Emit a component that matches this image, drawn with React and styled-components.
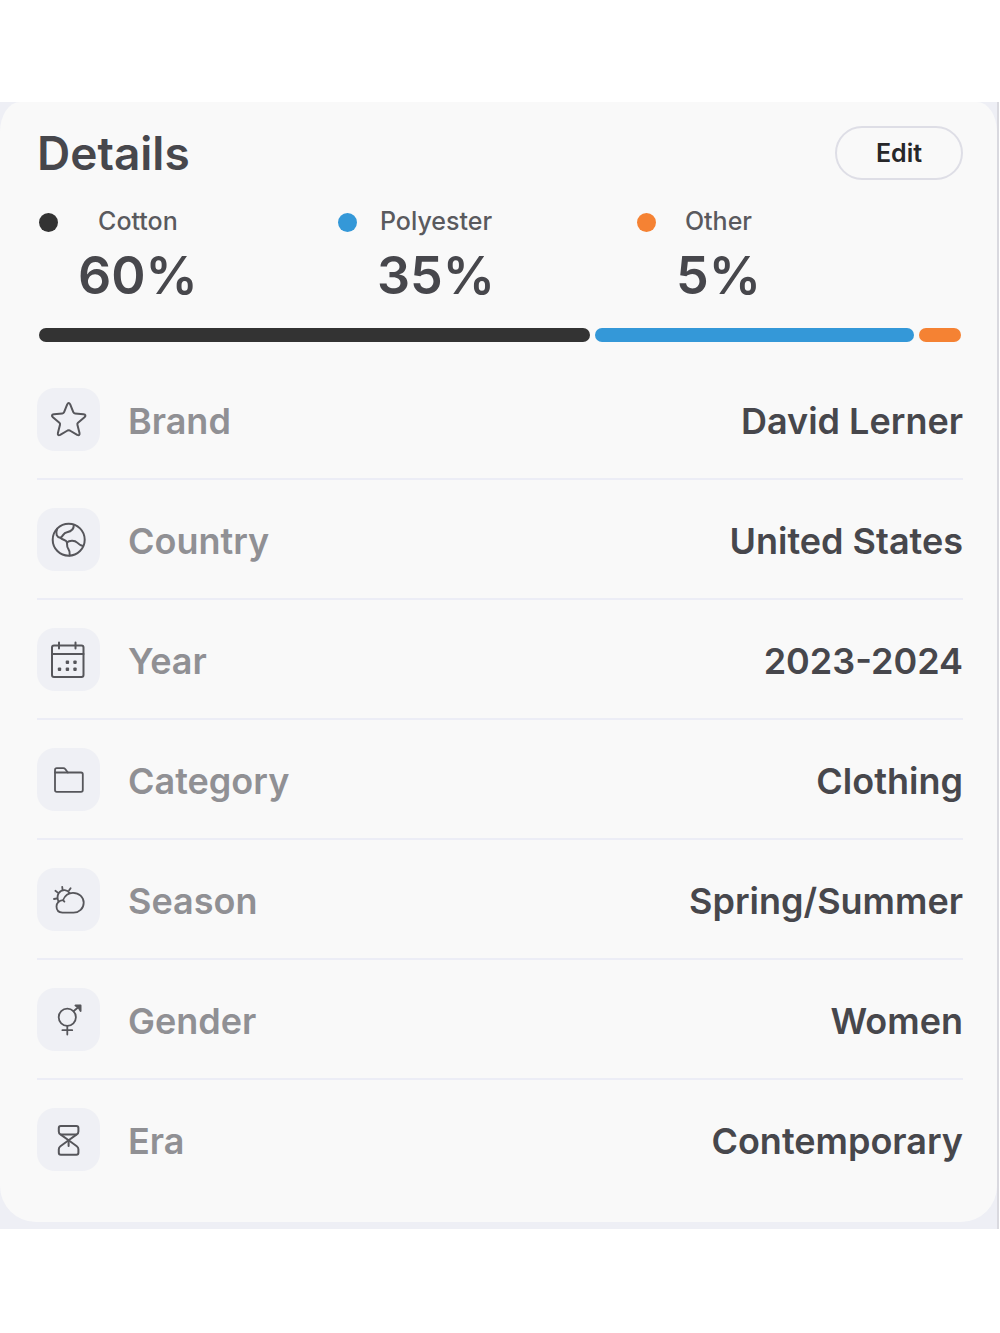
import styled, { createGlobalStyle } from "styled-components";

const GlobalStyle = createGlobalStyle`
  * {
    box-sizing: border-box;
  }
  body {
    margin: 0;
    background-color: #fff;
    font-family: Inter, "Liberation Sans", sans-serif;
    color: #47474c;
  }
`;

const Page = styled.main`
  margin: 102px 1px 104px 0;
  padding-bottom: 7px;
  border-right: 2px solid #d9d9df;
  background-color: #eeeff5;
`;
const Card = styled.section`
  padding: 22px 34px 22px 37px;
  border-radius: 20px 20px 36px 36px / 30px 30px 36px 36px;
  background-color: #f9f9f9;
`;
const Header = styled.header`
  display: flex;
  align-items: center;
  justify-content: space-between;
`;
const Title = styled.h2`
  margin: 0;
  font-size: 46px;
  font-weight: 600;
  line-height: 58px;
`;
const EditButton = styled.button`
  width: 128px;
  height: 54px;
  padding: 0;
  border: 2px solid #dedee6;
  border-radius: 27px;
  background-color: transparent;
  font-family: inherit;
  font-size: 25px;
  font-weight: 600;
  color: #27272a;
  cursor: pointer;
`;

// Fabric composition
const Legend = styled.ul`
  display: grid;
  grid-template-columns: repeat(3, 1fr);
  margin: 22px 0 0;
  padding: 0 27px 0 2px;
  list-style: none;
`;
const LegendItem = styled.li`
  display: flex;
  align-items: flex-start;
  gap: 20px;
`;
const Dot = styled.span`
  width: 19px;
  height: 19px;
  margin-top: 9px;
  border-radius: 50%;
  background-color: ${props => props.$color};
`;
const LegendText = styled.div`
  display: flex;
  flex-direction: column;
  align-items: center;
`;
const Fabric = styled.span`
  font-size: 25px;
  font-weight: 500;
  line-height: 34px;
  color: #5a5a5e;
`;
const Percent = styled.strong`
  font-size: 52px;
  font-weight: 600;
  line-height: 76px;
`;
const Bar = styled.div`
  display: flex;
  gap: 5px;
  margin-top: 14px;
  padding: 0 2px;
`;
const Segment = styled.span`
  flex: ${props => props.$share} 0 0;
  height: 14px;
  border-radius: 7px;
  background-color: ${props => props.$color};
`;

const List = styled.dl`
  margin: 18px 0 0;
`;
const Row = styled.div`
  display: flex;
  align-items: center;
  height: 120px;
  border-bottom: 2px solid #ecedf6;
  &:last-child {
    border-bottom-color: transparent;
  }
`;
const Tile = styled.span`
  display: flex;
  width: 63px;
  height: 63px;
  border-radius: 18px;
  background-color: #eff0f5;
`;
const Label = styled.dt`
  margin-left: 28px;
  padding-top: 4px;
  font-size: 36px;
  font-weight: 600;
  line-height: 44px;
  color: #909094;
`;
const Value = styled.dd`
  margin: 0 0 0 auto;
  padding-top: 4px;
  font-size: 36px;
  font-weight: 600;
  line-height: 44px;
`;

const Icon = ({ children, strokeWidth = 2 }) => (
  <svg
    width="63"
    height="63"
    viewBox="0 0 63 63"
    fill="none"
    stroke="#56565b"
    strokeWidth={strokeWidth}
    strokeLinecap="round"
    strokeLinejoin="round"
    aria-hidden="true"
  >
    {children}
  </svg>
);

const StarIcon = () => (
  <Icon>
    <path d="M30.2 16.4Q31.7 13.4 33.2 16.4L36.3 24.2Q36.8 25.4 38 25.5L46.5 26.3Q49.8 26.8 47.5 29.2L41 34.7Q40.1 35.5 40.4 36.7L42.5 45Q43 48.2 40.2 46.9L32.8 42.5Q31.7 41.9 30.6 42.5L23.2 46.9Q20.4 48.2 20.9 45L23 36.7Q23.3 35.5 22.4 34.7L15.9 29.2Q13.6 26.8 16.9 26.3L25.4 25.5Q26.6 25.4 27.1 24.2Z" />
  </Icon>
);
const GlobeIcon = () => (
  <Icon>
    <circle cx="31.7" cy="31.7" r="16" />
    <path d="M36.8 16.8C37 21 34 23.6 30 24.2C26 24.8 26.5 28 23.5 29.8C20 29.5 18 26 20.2 20.8" />
    <path d="M23.5 29.8C25.5 32 28.5 31.6 29.8 33.8C30.6 36 29.3 38.2 31.2 40.6C33 43 33 45 32.7 47.5" />
    <path d="M29.8 34.6C32.5 32 38 32.4 40.2 34.6C42 36.4 43.8 37.4 46 38" />
  </Icon>
);
const CalendarIcon = () => (
  <Icon>
    <rect x="15" y="17.5" width="31.5" height="31.5" rx="2" />
    <path d="M15 26H46.5M22 14.5V20.5M38.5 14.5V20.5" />
    <g fill="#56565b" stroke="none">
      <rect x="28.7" y="32.5" width="3.4" height="3.4" rx="1" />
      <rect x="36.3" y="32.5" width="3.4" height="3.4" rx="1" />
      <rect x="20.8" y="39.5" width="3.4" height="3.4" rx="1" />
      <rect x="28.7" y="39.5" width="3.4" height="3.4" rx="1" />
      <rect x="36.3" y="39.5" width="3.4" height="3.4" rx="1" />
    </g>
  </Icon>
);
const FolderIcon = () => (
  <Icon strokeWidth={1.8}>
    <path d="M18 24.5V22Q18 20.2 19.8 20.2H26.2Q27.6 20.2 28.4 21.2L30.8 24.5" />
    <path d="M18 24.5H44Q45.8 24.5 45.8 26.3V42Q45.8 43.8 44 43.8H19.8Q18 43.8 18 42Z" />
  </Icon>
);
const WeatherIcon = () => (
  <Icon strokeWidth={1.8}>
    <path d="M25.5 44.7Q19.5 44.2 19.5 38.5Q19.8 33 26 32.2C28 27 31.5 24.8 36 24.8C42 24.8 46.7 29 46.7 34.7C46.7 40.5 42 44.7 36.5 44.7Z" />
    <path d="M21.5 33.6C18.8 27 22.5 21.8 27.8 22.2Q30.8 22.6 32.8 25.2" />
    <path d="M25.6 21.8L25.2 18.8M32 22.6L33.6 20.2M20.8 24.6L18.4 22.8M19.8 30.5L17 31M26.2 32.4L27.4 33.6" />
  </Icon>
);
const GenderIcon = () => (
  <Icon strokeWidth={1.8}>
    <circle cx="30.3" cy="29.3" r="8.6" />
    <path d="M36.5 23.2L43 17.8M30.3 38V46.6M25.4 42.2H35.2" />
    <path d="M38.4 17.4H43.6V23L41.4 19.4Z" fill="#56565b" />
  </Icon>
);
const HourglassIcon = () => (
  <Icon>
    <path d="M23.8 18H39.4Q41.4 18 41.4 20V23.5Q41.4 25.5 39.8 26.4L31.6 32.3L23.4 26.4Q21.8 25.5 21.8 23.5V20Q21.8 18 23.8 18Z" />
    <path d="M31.6 32.3L39.8 38.2Q41.4 39.3 41.4 41.2V44.8Q41.4 46.8 39.4 46.8H23.8Q21.8 46.8 21.8 44.8V41.2Q21.8 39.3 23.4 38.2Z" />
    <path d="M24.5 26.4H38.7M31.6 32.3V38" />
  </Icon>
);

const fabrics = [
  { name: "Cotton", percent: 60, share: 60.4, color: "#333333" },
  { name: "Polyester", percent: 35, share: 35, color: "#3498d8" },
  { name: "Other", percent: 5, share: 4.6, color: "#f58233" }
];

const details = [
  { label: "Brand", value: "David Lerner", icon: <StarIcon /> },
  { label: "Country", value: "United States", icon: <GlobeIcon /> },
  { label: "Year", value: "2023-2024", icon: <CalendarIcon /> },
  { label: "Category", value: "Clothing", icon: <FolderIcon /> },
  { label: "Season", value: "Spring/Summer", icon: <WeatherIcon /> },
  { label: "Gender", value: "Women", icon: <GenderIcon /> },
  { label: "Era", value: "Contemporary", icon: <HourglassIcon /> }
];

const App = () => (
  <>
    <GlobalStyle />
    <Page>
      <Card>
        <Header>
          <Title>Details</Title>
          <EditButton type="button">Edit</EditButton>
        </Header>
        <Legend>
          {fabrics.map(({ name, percent, color }) => (
            <LegendItem key={name}>
              <Dot $color={color} />
              <LegendText>
                <Fabric>{name}</Fabric>
                <Percent>{percent}%</Percent>
              </LegendText>
            </LegendItem>
          ))}
        </Legend>
        <Bar>
          {fabrics.map(({ name, share, color }) => (
            <Segment key={name} $share={share} $color={color} />
          ))}
        </Bar>
        <List>
          {details.map(({ label, value, icon }) => (
            <Row key={label}>
              <Tile>{icon}</Tile>
              <Label>{label}</Label>
              <Value>{value}</Value>
            </Row>
          ))}
        </List>
      </Card>
    </Page>
  </>
);

export default App;
